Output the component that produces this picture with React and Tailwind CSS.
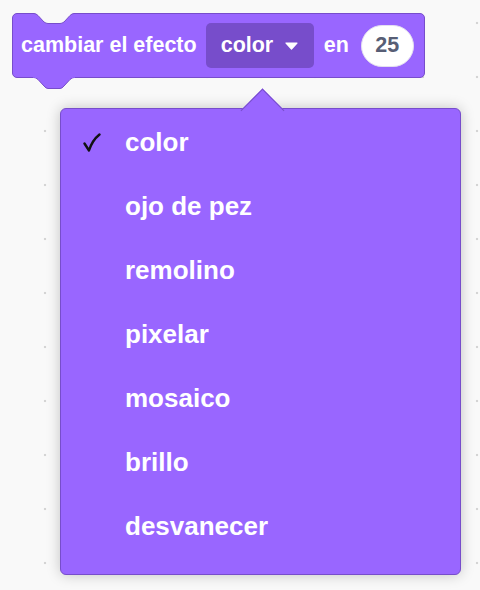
import React from 'react'

const items = ['color', 'ojo de pez', 'remolino', 'pixelar', 'mosaico', 'brillo', 'desvanecer']

function Check() {
  return (
    <svg width="18" height="19" viewBox="0 0 18 19" className="block">
      <path d="M1.5 10.5 L6 17.5 C8 11 11.5 5.5 16.5 1.5" fill="none" stroke="#111" strokeWidth="2.4" strokeLinecap="round" strokeLinejoin="round" />
    </svg>
  )
}

function Block() {
  return (
    <div className="relative flex items-center w-[413px] h-[65px] bg-[#9966ff] border border-[#774dcb] rounded-[5px] pl-[8px] text-white text-[21.5px] font-bold">
      {/* top notch cut into the block */}
      <svg className="absolute -top-px left-[20px]" width="42" height="12" viewBox="0 0 42 12">
        <path d="M0 0.5 L1 0.5 Q3 0.5 5 2.5 L11 9 Q13 10.5 15 10.5 L27 10.5 Q29 10.5 31 9 L37 2.5 Q39 0.5 41 0.5 L42 0.5 L42 -1 L0 -1 Z" fill="#f9f9f9" />
        <path d="M0 0.5 L1 0.5 Q3 0.5 5 2.5 L11 9 Q13 10.5 15 10.5 L27 10.5 Q29 10.5 31 9 L37 2.5 Q39 0.5 41 0.5 L42 0.5" fill="none" stroke="#774dcb" strokeWidth="1" />
      </svg>
      {/* bottom tab */}
      <svg className="absolute top-[63px] left-[20px]" width="42" height="13" viewBox="0 0 42 13">
        <path d="M0 0.5 L1 0.5 Q3 0.5 5 2.5 L11 9 Q13 11.5 15 11.5 L27 11.5 Q29 11.5 31 9 L37 2.5 Q39 0.5 41 0.5 L42 0.5 L42 0 L0 0 Z" fill="#9966ff" />
        <path d="M0 0.5 L1 0.5 Q3 0.5 5 2.5 L11 9 Q13 11.5 15 11.5 L27 11.5 Q29 11.5 31 9 L37 2.5 Q39 0.5 41 0.5 L42 0.5" fill="none" stroke="#774dcb" strokeWidth="1" />
        <rect x="0" y="0" width="42" height="1" fill="#9966ff" />
        <path d="M0.5 0 L1 0.5 M41.5 0 L41 0.5" stroke="#774dcb" strokeWidth="1" />
      </svg>
      <span className="leading-none">cambiar el efecto</span>
      <div className="ml-[9px] flex items-center w-[108px] h-[45px] rounded-[5px] bg-[#774dcb] pl-[15px]">
        <span className="leading-none">color</span>
        <svg className="ml-[12px]" width="13" height="8" viewBox="0 0 13 8">
          <path d="M1 1 L12 1 L6.5 7 Z" fill="#fff" stroke="#fff" strokeWidth="1.2" strokeLinejoin="round" />
        </svg>
      </div>
      <span className="ml-[10px] leading-none">en</span>
      <div className="ml-[12px] flex items-center justify-center w-[53px] h-[42px] rounded-full bg-white border border-[#e4dff0] text-[#575e75]">
        <span className="leading-none">25</span>
      </div>
    </div>
  )
}

export default function App() {
  return (
    <div className="w-[480px] h-[590px] overflow-hidden bg-[#f9f9f9] bg-[radial-gradient(circle,#d4d4d4_1.2px,transparent_1.6px)] bg-[length:54px_54px] bg-[position:18px_-4px] font-['Liberation_Sans',Arial,sans-serif] pt-[13px] pl-[12px]">
      <Block />
      <div className="relative mt-[30px] ml-[48px] w-[401px] h-[467px] bg-[#9966ff] border border-[#774dcb] rounded-[6px] shadow-[0_0_14px_rgba(0,0,0,0.22)] pt-[1px]">
        <div className="absolute left-[186px] top-[-14.5px] w-[31px] h-[31px] rotate-45 bg-[#9966ff] border-t border-l border-[#774dcb]" />
        <div className="relative">
          {items.map((label, i) => (
            <div key={label} className="flex items-center h-[64px] pl-[22px]">
              <div className="w-[42px] flex items-center">{i === 0 && <Check />}</div>
              <span className="text-white text-[26px] font-bold leading-none">{label}</span>
            </div>
          ))}
        </div>
      </div>
    </div>
  )
}
